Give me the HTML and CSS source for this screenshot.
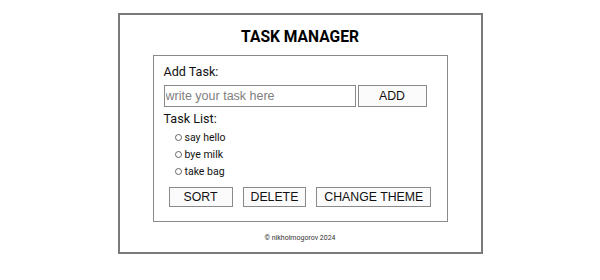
FILE: index.html
```html
<!DOCTYPE html>
<html lang="en">
<head>
<meta charset="utf-8">
<title>Task Manager</title>
<link rel="stylesheet" href="styles.css">
</head>
<body>
<div class="app">
  <h1 class="title">TASK MANAGER</h1>
  <div class="panel">
    <div class="label">Add Task:</div>
    <div class="add-row">
      <input class="task-input" type="text" placeholder="write your task here">
      <button class="btn btn-add">ADD</button>
    </div>
    <div class="label label-list">Task List:</div>
    <ul class="tasks">
      <li class="task"><span class="radio"></span><span>say hello</span></li>
      <li class="task"><span class="radio"></span><span>bye milk</span></li>
      <li class="task"><span class="radio"></span><span>take bag</span></li>
    </ul>
    <div class="actions">
      <button class="btn btn-sort">SORT</button>
      <button class="btn">DELETE</button>
      <button class="btn">CHANGE THEME</button>
    </div>
  </div>
  <div class="footer">© nikholmogorov 2024</div>
</div>
</body>
</html>
```

FILE: styles.css
```css
html, body {
  margin: 0;
  padding: 0;
  background: #fff;
}
body {
  padding-top: 13px;
  font-family: Roboto, "Liberation Sans", sans-serif;
  color: #111;
}
.app {
  box-sizing: border-box;
  width: 365px;
  margin: 0 auto;
  border: 2px solid #7a7a7a;
}
.title {
  margin: 0;
  padding-top: 12px;
  font-size: 15.6px;
  line-height: 20px;
  font-weight: 700;
  text-align: center;
  color: #000;
}
.panel {
  box-sizing: border-box;
  width: 295px;
  margin: 8px auto 0;
  border: 1px solid #8a8a8a;
  padding: 8px 10px 14px;
}
.label {
  font-size: 12.6px;
  line-height: 16px;
  color: #111;
}
.label-list {
  margin-top: 4px;
}
.add-row {
  display: flex;
  gap: 2px;
  margin-top: 5px;
}
.task-input {
  box-sizing: border-box;
  width: 192px;
  height: 22px;
  margin: 0;
  padding: 1px 1px;
  border: 1px solid #8a8a8a;
  font-family: "Liberation Sans", Arial, sans-serif;
  font-size: 12.5px;
  color: #333;
  outline: none;
}
.task-input::placeholder {
  color: #808080;
}
.btn {
  box-sizing: border-box;
  flex-shrink: 0;
  height: 20px;
  margin: 0;
  padding: 0 7px;
  border: 1px solid #8a8a8a;
  background: #fbfbfb;
  font-family: "Liberation Sans", Arial, sans-serif;
  font-size: 12.3px;
  line-height: 18px;
  white-space: nowrap;
  color: #111;
}
.btn-add {
  width: 69px;
  height: 22px;
}
.btn-sort {
  min-width: 64px;
}
.tasks {
  list-style: none;
  margin: 2px 0 0;
  padding: 0;
}
.task {
  display: flex;
  align-items: center;
  height: 17px;
  font-size: 10.5px;
  color: #111;
}
.radio {
  box-sizing: border-box;
  width: 7px;
  height: 7px;
  margin: 0 3px 0 11px;
  border: 1px solid #666;
  border-radius: 50%;
}
.actions {
  display: flex;
  margin-top: 7px;
}
.actions .btn {
  margin: 0 5px;
}
.footer {
  margin-top: 10px;
  padding-bottom: 8px;
  font-size: 7px;
  line-height: 12px;
  text-align: center;
  color: #333;
}
```
